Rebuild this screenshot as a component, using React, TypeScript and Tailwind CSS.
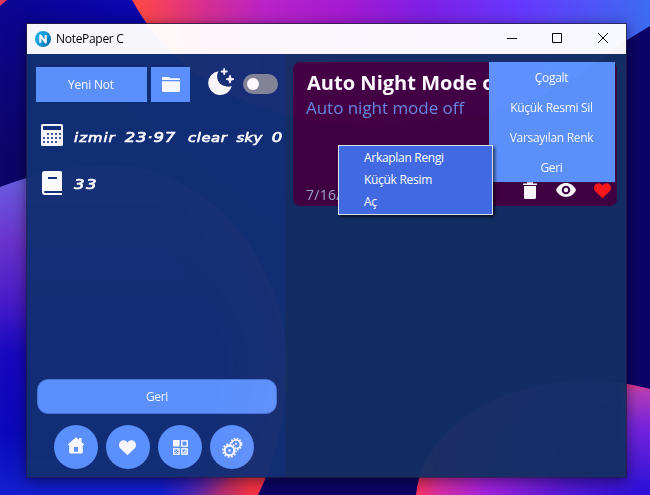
import React from "react";

const ui = "font-['Open_Sans','Noto_Sans',sans-serif]";

function Wallpaper() {
  return (
    <svg className="absolute inset-0" width="650" height="495" viewBox="0 0 650 495" aria-hidden="true">
      <defs>
        <linearGradient id="base" gradientUnits="userSpaceOnUse" x1="0" y1="150" x2="120" y2="0">
          <stop offset="0" stopColor="#0e0468" />
          <stop offset="1" stopColor="#0a06ad" />
        </linearGradient>
        <linearGradient id="top" gradientUnits="userSpaceOnUse" x1="132" y1="30" x2="650" y2="0">
          <stop offset="0" stopColor="#ff4a3c" />
          <stop offset="0.05" stopColor="#f5405c" />
          <stop offset="0.14" stopColor="#d62f90" />
          <stop offset="0.26" stopColor="#b923c8" />
          <stop offset="0.42" stopColor="#a31ad2" />
          <stop offset="0.57" stopColor="#7d20e6" />
          <stop offset="0.75" stopColor="#6638ff" />
          <stop offset="1" stopColor="#3c6cf0" />
        </linearGradient>
        <linearGradient id="left" gradientUnits="userSpaceOnUse" x1="0" y1="180" x2="0" y2="495">
          <stop offset="0" stopColor="#6a5ce0" />
          <stop offset="0.2" stopColor="#6a32cc" />
          <stop offset="0.38" stopColor="#4a1cc8" />
          <stop offset="0.55" stopColor="#1808c0" />
          <stop offset="0.8" stopColor="#0a08bc" />
          <stop offset="1" stopColor="#1420d0" />
        </linearGradient>
        <radialGradient id="rim" gradientUnits="userSpaceOnUse" cx="110" cy="350" r="182">
          <stop offset="0.6" stopColor="#ff3a40" stopOpacity="0" />
          <stop offset="0.82" stopColor="#c83090" stopOpacity="0.6" />
          <stop offset="0.98" stopColor="#f83246" />
        </radialGradient>
        <linearGradient id="rimFade" gradientUnits="userSpaceOnUse" x1="160" y1="0" x2="250" y2="0">
          <stop offset="0" stopColor="#000" />
          <stop offset="1" stopColor="#fff" />
        </linearGradient>
        <mask id="rimMask">
          <rect width="650" height="495" fill="url(#rimFade)" />
        </mask>
        <radialGradient id="corner" gradientUnits="userSpaceOnUse" cx="648" cy="495" r="236">
          <stop offset="0" stopColor="#2c10d8" />
          <stop offset="0.35" stopColor="#5418d8" />
          <stop offset="0.7" stopColor="#a822e0" />
          <stop offset="0.88" stopColor="#d82ca8" />
          <stop offset="1" stopColor="#ff3550" />
        </radialGradient>
        <linearGradient id="cornerRight" gradientUnits="userSpaceOnUse" x1="640" y1="382" x2="640" y2="480">
          <stop offset="0" stopColor="#ee3870" />
          <stop offset="0.1" stopColor="#b43cb8" />
          <stop offset="0.45" stopColor="#7724dc" />
          <stop offset="1" stopColor="#3a16d8" />
        </linearGradient>
      </defs>
      <rect width="650" height="495" fill="#0d0467" />
      <rect width="300" height="300" fill="url(#base)" />
      <path d="M0 0H7L0 6Z" fill="#e63858" />
      <path d="M132 0C170 70 240 112 330 124C440 137 555 105 614 48L650 26V0Z" fill="url(#top)" />
      <path d="M0 187C34 175 65 165 110 165C210 167 288 262 287 370C286 414 278 453 258 495H0Z" fill="url(#left)" />
      <path
        d="M0 187C34 175 65 165 110 165C210 167 288 262 287 370C286 414 278 453 258 495H0Z"
        fill="url(#rim)"
        mask="url(#rimMask)"
      />
      <path d="M416 495C422 428 503 381 585 380C609 380 631 384 650 389V495Z" fill="url(#corner)" />
      <path d="M622 383C633 385 641 387 650 389V480H622Z" fill="url(#cornerRight)" />
    </svg>
  );
}

function Logo() {
  return (
    <svg width="16" height="16" viewBox="0 0 16 16">
      <defs>
        <linearGradient id="logo" x1="0" y1="0" x2="1" y2="0.5">
          <stop offset="0" stopColor="#22bdf0" />
          <stop offset="0.55" stopColor="#13a0dc" />
          <stop offset="1" stopColor="#0879b8" />
        </linearGradient>
      </defs>
      <circle cx="8" cy="8" r="8" fill="url(#logo)" />
      <path d="M5.3 11.8V4.3L10.7 11.5V4" fill="none" stroke="#fff" strokeWidth="2.1" strokeLinejoin="round" />
    </svg>
  );
}

function TitleBar() {
  return (
    <header className="flex h-[30px] shrink-0 items-center bg-white pl-2">
      <div className="-mt-px"><Logo /></div>
      <span className="ml-[5px] text-[12px] leading-[16px] tracking-[-0.3px] text-black">NotePaper C</span>
      <svg className="ml-auto" width="136" height="30" viewBox="0 0 136 30" fill="none" stroke="#000" strokeWidth="1">
        <path d="M17 14.5H27M62.5 9.5H71.5V18.5H62.5ZM108 9L118 19M118 9L108 19" />
      </svg>
    </header>
  );
}

function FolderIcon() {
  return (
    <svg width="18" height="15" viewBox="0 0 18 15" fill="#fff">
      <path d="M0 3V1Q0 0 1 0H7L8.5 1.3H17Q18 1.3 18 2.3V3Z" />
      <path d="M0 4.3H18V13.5Q18 15 16.5 15H1.5Q0 15 0 13.5Z" />
    </svg>
  );
}

function MoonIcon() {
  return (
    <svg width="28" height="28" viewBox="0 0 28 28" fill="#fff">
      <path d="M10.5 3.2A12 12 0 1 0 23.8 18C15 21 5.5 13 10.5 3.2Z" />
      <path d="M16.2 .9V6.1M13.6 3.5H18.8" stroke="#fff" strokeWidth="1.8" strokeLinecap="round" />
      <path d="M22 7.2L23 10.2L26 11.2L23 12.2L22 15.2L21 12.2L18 11.2L21 10.2Z" stroke="#fff" strokeWidth="1" strokeLinejoin="round" />
    </svg>
  );
}

function CalculatorIcon() {
  const dots = [
    [6, 9], [10, 9], [14, 9], [18, 9],
    [2, 13], [6, 13], [10, 13], [14, 13], [18, 13],
    [2, 17], [6, 17], [10, 17], [14, 17],
  ];
  return (
    <svg width="22" height="22" viewBox="0 0 22 22">
      <rect width="22" height="22" rx="1.6" fill="#fff" />
      <rect x="2" y="2" width="18" height="4" fill="#122f76" />
      {dots.map(([x, y]) => (
        <rect key={`${x}-${y}`} x={x} y={y} width="2" height="2" fill="#455b96" />
      ))}
    </svg>
  );
}

function BookIcon() {
  return (
    <svg width="20" height="24" viewBox="0 0 20 24">
      <path d="M2.5 0H18.5Q20 0 20 1.5V20H3Q2 20 2 21T3 22H20V24H3Q0 24 0 20.5V2.5Q0 0 2.5 0Z" fill="#fff" />
      <rect x="6" y="6" width="9" height="2" fill="#122f76" />
    </svg>
  );
}

function HomeIcon() {
  return (
    <svg width="16" height="17" viewBox="0 0 16 17" fill="#fff">
      <path fillRule="evenodd" d="M0 7.3L8 .3L11 2.8V1H13.5V5L16 7.3V8H14.8V15Q14.8 16.5 13.3 16.5H2.7Q1.2 16.5 1.2 15V8H0ZM6 10V14.8H10V10Z" />
    </svg>
  );
}

function HeartIcon({ className, size }: { className: string; size: number }) {
  return (
    <svg className={className} width={size} height={size * 0.9} viewBox="0 0 18 16" fill="currentColor">
      <path d="M9 16L1.6 9C-.5 7 -.5 3.2 1.6 1.4C3.7-.5 7.4-.3 9 2.5C10.6-.3 14.3-.5 16.4 1.4C18.5 3.2 18.5 7 16.4 9Z" />
    </svg>
  );
}

function GridIcon() {
  return (
    <svg width="15" height="15" viewBox="0 0 15 15" fill="none" stroke="#fff" strokeWidth="1.4">
      <rect x="0" y="0" width="6.6" height="6.6" rx=".5" fill="#fff" stroke="none" />
      <rect x="8.8" y=".8" width="5.4" height="5.4" />
      <rect x=".7" y="8.8" width="5.4" height="5.4" />
      <rect x="8.8" y="8.8" width="5.4" height="5.4" />
      <path d="M2.2 10.3L4.7 12.8M4.7 10.3L2.2 12.8M10.1 12.8L12.8 10.1V12.8Z" strokeWidth=".9" />
    </svg>
  );
}

function GearsIcon() {
  return (
    <svg width="21" height="20" viewBox="0 0 21 20" fill="none" stroke="#fff">
      <circle cx="14" cy="6.2" r="4.4" strokeWidth="1.7" />
      <circle cx="14" cy="6.2" r="5.7" strokeWidth="1.5" strokeDasharray="1.6 1.38" />
      <circle cx="7.5" cy="12.5" r="7.4" fill="#5e95ff" stroke="none" />
      <circle cx="7.5" cy="12.5" r="4.8" strokeWidth="2.2" />
      <circle cx="7.5" cy="12.5" r="6.6" strokeWidth="1.6" strokeDasharray="1.8 1.656" />
      <circle cx="7.5" cy="12.5" r="1.2" fill="#fff" stroke="none" />
      <path d="M14 4.8V7" strokeWidth="1.4" />
    </svg>
  );
}

function RoundButton({ children }: { children: React.ReactNode }) {
  return (
    <button className="flex h-11 w-11 items-center justify-center rounded-full bg-[#5e95ff]">{children}</button>
  );
}

function Sidebar() {
  return (
    <aside className="flex w-[258px] shrink-0 flex-col bg-[#122f74]">
      <div className="flex items-start pt-[13px] pl-[9px]">
        <button className="h-[35px] w-[111px] bg-[#5e95ff] pt-px pr-px text-[12px] tracking-[-0.2px] text-white">Yeni Not</button>
        <button className="ml-1 flex h-[35px] w-[39px] items-center justify-center bg-[#5e95ff]">
          <FolderIcon />
        </button>
        <div className="mt-px ml-[18px]"><MoonIcon /></div>
        <div className="mt-[7px] ml-[7px] flex h-5 w-[35px] items-center rounded-full bg-[#808795] pl-1">
          <span className="h-3 w-3 rounded-full bg-white" />
        </div>
      </div>
      <div className="mt-[22px] flex h-[22px] items-center pl-[14px] font-['DejaVu_Sans',sans-serif] text-[14.5px] text-white italic [-webkit-text-stroke:0.7px_white]">
        <CalculatorIcon />
        <div className="ml-[10.5px] flex origin-left scale-x-[1.14] items-baseline pt-[4px] leading-5 whitespace-nowrap">
          <span className="w-[44.5px] text-[13px] tracking-[0.9px]">izmir</span>
          <span className="w-[55.5px] tracking-[0.7px]">23·97</span>
          <span className="w-[42.5px] text-[13px] tracking-[0.5px]">clear</span>
          <span className="w-[31px] text-[13px] tracking-[0.3px]">sky</span>
          <span>0</span>
        </div>
      </div>
      <div className="mt-[25px] flex h-6 items-center pl-[15px] font-['DejaVu_Sans',sans-serif] text-[14.5px] text-white italic [-webkit-text-stroke:0.7px_white]">
        <BookIcon />
        <span className="ml-[11.5px] origin-left scale-x-[1.14] pt-0.5 leading-5 tracking-[1.2px]">33</span>
      </div>
      <div className="mt-auto pr-[8px] pl-[10px]">
        <button className="block h-[35px] w-full rounded-[11px] border border-[#4577db] bg-[#5e95ff] text-[12px] tracking-[-0.3px] text-white">Geri</button>
      </div>
      <nav className="mt-[11px] mb-2 flex gap-2 pl-[26.5px]">
        <RoundButton><div className="-mt-1"><HomeIcon /></div></RoundButton>
        <RoundButton><HeartIcon className="mt-0.5 text-white" size={17} /></RoundButton>
        <RoundButton><div className="mt-px ml-0.5"><GridIcon /></div></RoundButton>
        <RoundButton><div className="mt-px ml-px"><GearsIcon /></div></RoundButton>
      </nav>
    </aside>
  );
}

function NoteCard() {
  return (
    <article className="relative flex h-36 w-[324px] flex-col overflow-hidden rounded-[7px] bg-[#410040] pl-[14px]">
      <h2 className="mt-[7px] text-[20px] leading-[28px] font-bold tracking-[0.03px] whitespace-nowrap text-white">Auto Night Mode off</h2>
      <p className="mt-px -ml-px text-[17px] leading-[20px] tracking-[-0.03px] text-[#6688e2]">Auto night mode off</p>
      <div className="mt-auto flex h-7 items-center">
        <span className="-ml-px pt-1 text-[14px] tracking-[0.3px] whitespace-nowrap text-[#a4abd0]">7/16/</span>
        <svg className="mt-[-3px] ml-auto" width="14" height="17" viewBox="0 0 14 17" fill="#fff">
          <path d="M0 1.5H4V.3H10V1.5H14V3H0ZM1 4H13V15.5Q13 17 11.5 17H2.5Q1 17 1 15.5Z" />
        </svg>
        <svg className="mt-[-4px] ml-[19px]" width="20" height="14" viewBox="0 0 20 14">
          <path d="M0 7C4-2.3 16-2.3 20 7C16 16.3 4 16.3 0 7Z" fill="#fff" />
          <circle cx="10" cy="7" r="4.3" fill="#410040" />
          <circle cx="10" cy="7" r="2.2" fill="#fff" />
        </svg>
        <HeartIcon className="mt-[-3px] mr-[6.5px] ml-[17.5px] text-[#ff181b]" size={17} />
      </div>
    </article>
  );
}

function CardMenu() {
  const items = ["Çogalt", "Küçük Resmi Sil", "Varsayılan Renk", "Geri"];
  return (
    <div className="absolute top-[38px] left-[462px] flex w-[126px] flex-col bg-[#5e95ff]">
      {items.map((label) => (
        <button key={label} className="h-[30px] pt-px pr-px text-[12px] tracking-[-0.3px] text-white">{label}</button>
      ))}
    </div>
  );
}

function ContextMenu() {
  return (
    <div className="absolute top-[145px] left-[338px] flex h-[70px] w-[155px] flex-col border border-[#dbdde8] bg-[#4169e1] pt-px text-[12px] leading-[22px] tracking-[-0.3px] text-white shadow-[2px_2px_3px_rgba(0,0,0,0.6)]">
      <span className="pl-[25px]">Arkaplan Rengi</span>
      <span className="pl-[25px]">Küçük Resim</span>
      <span className="pl-[25px]">Aç</span>
    </div>
  );
}

export default function App() {
  return (
    <div className={`relative h-[495px] w-[650px] overflow-hidden ${ui}`}>
      <Wallpaper />
      <div className="absolute top-[23px] left-[26px] h-[455px] w-[601px] bg-[#231b40]/80 shadow-[0_3px_14px_rgba(0,0,0,0.5)] [clip-path:polygon(-40px_-40px,641px_-40px,641px_495px,-40px_495px,-40px_-40px,1px_1px,1px_454px,600px_454px,600px_1px,1px_1px)]" />
      <main className="absolute top-6 left-[27px] flex h-[453px] w-[599px] flex-col opacity-[0.965]">
        <TitleBar />
        <div className="flex min-h-0 flex-1">
          <Sidebar />
          <section className="flex-1 bg-[#142f63] pt-2 pl-2">
            <NoteCard />
          </section>
        </div>
        <CardMenu />
      </main>
      <ContextMenu />
    </div>
  );
}
